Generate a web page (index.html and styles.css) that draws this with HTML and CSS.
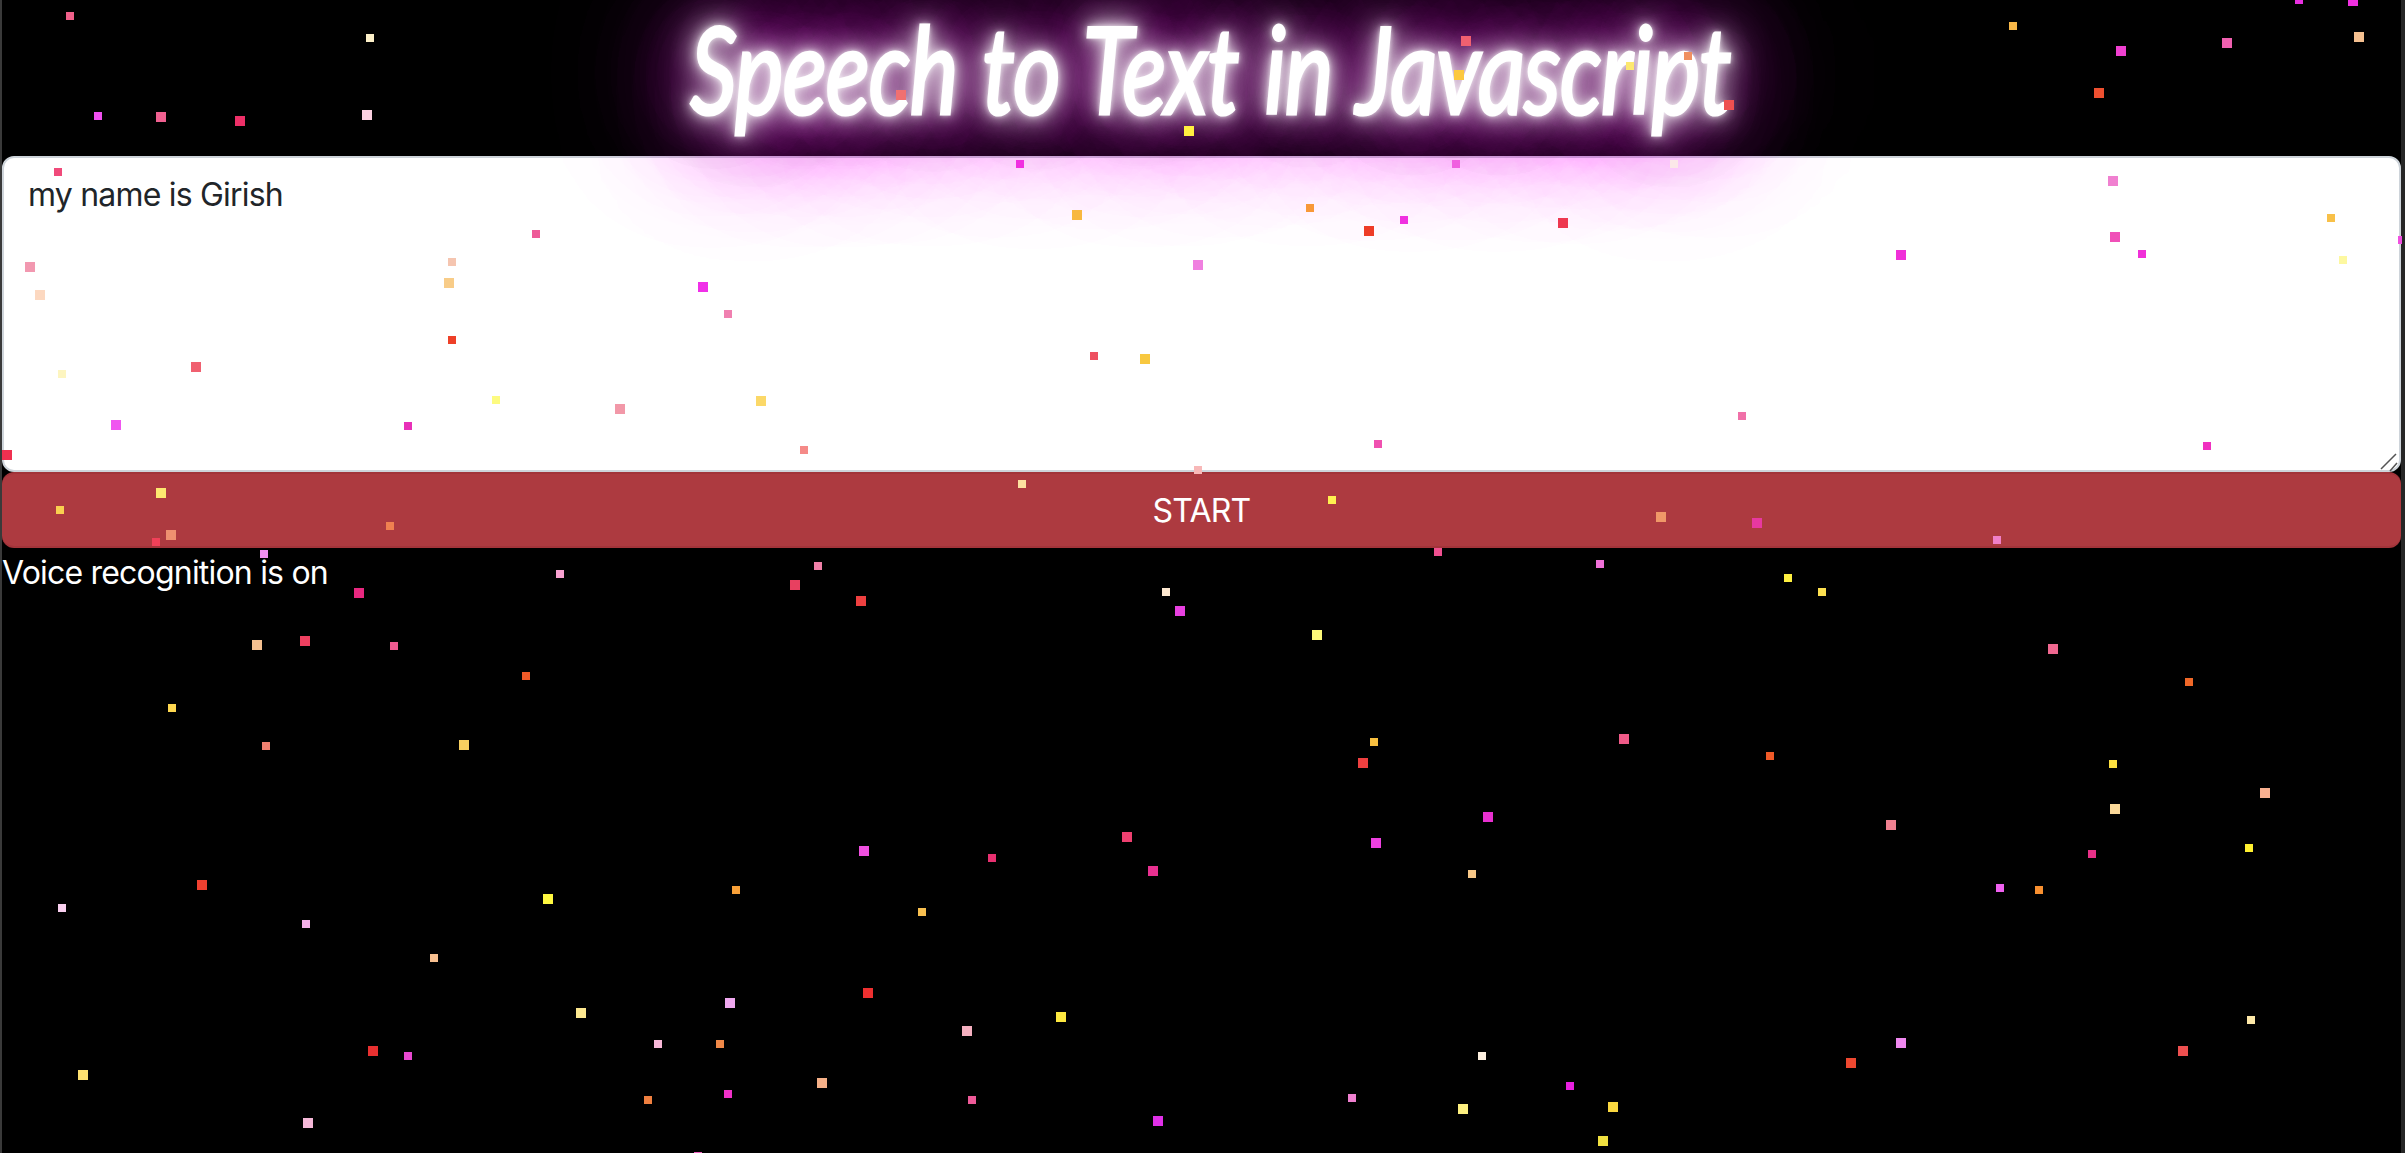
FILE: index.html
```html
<!DOCTYPE html>
<html>
  <head>
    <title>Speech to Text in Javascript</title>
    <link rel="stylesheet" href="styles.css">
  </head>
  <body>
    <h1 class="title"><span class="title-text">Speech to Text in Javascript</span></h1>

    <div class="field">
      <textarea class="note" spellcheck="false">my name is Girish</textarea>
      <svg class="grip" width="20" height="20" viewBox="0 0 20 20">
        <path d="M1 17 L16 2 M10 19 L17 11" />
      </svg>
    </div>
    <button class="start" type="button">START</button>
    <p class="status">Voice recognition is on</p>

    <!-- floating particles -->
    <svg class="particles" width="2402" height="1153" viewBox="0 0 2402 1153" shape-rendering="crispEdges">
      <rect class="p8" x="66" y="12" fill="#f0608a"/>
      <rect class="p8" x="366" y="34" fill="#fdf0c8"/>
      <rect class="p8" x="94" y="112" fill="#f050f0"/>
      <rect class="p10" x="156" y="112" fill="#f06090"/>
      <rect class="p10" x="235" y="116" fill="#ee3068"/>
      <rect class="p10" x="362" y="110" fill="#fbd0e0"/>
      <rect class="p8" x="54" y="168" fill="#f04a7a"/>
      <rect class="p8" x="532" y="230" fill="#ee5a98"/>
      <rect class="p10" x="25" y="262" fill="#f298b0"/>
      <rect class="p10" x="35" y="290" fill="#fcd8c0"/>
      <rect class="p8" x="448" y="258" fill="#f5c5b0"/>
      <rect class="p10" x="444" y="278" fill="#f8cc88"/>
      <rect class="p10" x="698" y="282" fill="#f030e8"/>
      <rect class="p8" x="724" y="310" fill="#f080b0"/>
      <rect class="p8" x="448" y="336" fill="#ee4028"/>
      <rect class="p10" x="191" y="362" fill="#f06070"/>
      <rect class="p8" x="58" y="370" fill="#fdf5c0"/>
      <rect class="p8" x="492" y="396" fill="#fdfb80"/>
      <rect class="p10" x="615" y="404" fill="#f298a8"/>
      <rect class="p10" x="756" y="396" fill="#fbd868"/>
      <rect class="p10" x="111" y="420" fill="#f055f0"/>
      <rect class="p8" x="404" y="422" fill="#e830b8"/>
      <rect class="p10" x="2" y="450" fill="#f03050"/>
      <rect class="p8" x="800" y="446" fill="#f58a88"/>
      <rect class="p10" x="156" y="488" fill="#fde870"/>
      <rect class="p8" x="56" y="506" fill="#fad050"/>
      <rect class="p10" x="166" y="530" fill="#ee9070"/>
      <rect class="p8" x="152" y="538" fill="#f04058"/>
      <rect class="p8" x="386" y="522" fill="#f08050"/>
      <rect class="p8" x="260" y="550" fill="#f090f0"/>
      <rect class="p8" x="556" y="570" fill="#f8a0d0"/>
      <rect class="p10" x="354" y="588" fill="#e82880"/>
      <rect class="p10" x="790" y="580" fill="#e84060"/>
      <rect class="p10" x="252" y="640" fill="#f5c090"/>
      <rect class="p10" x="300" y="636" fill="#ee4060"/>
      <rect class="p8" x="390" y="642" fill="#ee5a90"/>
      <rect class="p8" x="522" y="672" fill="#f05a28"/>
      <rect class="p8" x="168" y="704" fill="#ffd850"/>
      <rect class="p8" x="262" y="742" fill="#f08070"/>
      <rect class="p10" x="459" y="740" fill="#f8d060"/>
      <rect class="p10" x="197" y="880" fill="#f04030"/>
      <rect class="p8" x="58" y="904" fill="#fad0f0"/>
      <rect class="p8" x="302" y="920" fill="#f5b0e8"/>
      <rect class="p10" x="543" y="894" fill="#fff840"/>
      <rect class="p8" x="732" y="886" fill="#f8a038"/>
      <rect class="p8" x="430" y="954" fill="#f8c090"/>
      <rect class="p10" x="725" y="998" fill="#f0a8f0"/>
      <rect class="p10" x="576" y="1008" fill="#fde890"/>
      <rect class="p8" x="654" y="1040" fill="#f8b8d8"/>
      <rect class="p8" x="716" y="1040" fill="#f08848"/>
      <rect class="p10" x="368" y="1046" fill="#e83030"/>
      <rect class="p8" x="404" y="1052" fill="#e848d0"/>
      <rect class="p10" x="78" y="1070" fill="#fde070"/>
      <rect class="p8" x="644" y="1096" fill="#f08040"/>
      <rect class="p8" x="724" y="1090" fill="#f030c8"/>
      <rect class="p10" x="303" y="1118" fill="#f5b8d8"/>
      <rect class="p8" x="694" y="1152" fill="#f060c0"/>
      <rect class="p10" x="896" y="90" fill="#f07070"/>
      <rect class="p10" x="1184" y="126" fill="#fff040"/>
      <rect class="p10" x="1461" y="36" fill="#f06070"/>
      <rect class="p10" x="1454" y="70" fill="#fcc840"/>
      <rect class="p8" x="1016" y="160" fill="#f030e0"/>
      <rect class="p8" x="1452" y="160" fill="#f060e0"/>
      <rect class="p10" x="1072" y="210" fill="#f8b840"/>
      <rect class="p8" x="1306" y="204" fill="#f89838"/>
      <rect class="p10" x="1364" y="226" fill="#ee3c28"/>
      <rect class="p8" x="1400" y="216" fill="#f030e0"/>
      <rect class="p10" x="1558" y="218" fill="#ee3850"/>
      <rect class="p10" x="1193" y="260" fill="#f080e0"/>
      <rect class="p8" x="1090" y="352" fill="#ee5060"/>
      <rect class="p10" x="1140" y="354" fill="#f8c840"/>
      <rect class="p8" x="1684" y="52" fill="#f09060"/>
      <rect class="p8" x="1626" y="62" fill="#fde870"/>
      <rect class="p10" x="1724" y="100" fill="#ee5050"/>
      <rect class="p8" x="1670" y="160" fill="#fbe8e8"/>
      <rect class="p8" x="2009" y="22" fill="#f8b848"/>
      <rect class="p10" x="2116" y="46" fill="#f040d0"/>
      <rect class="p10" x="2222" y="38" fill="#f060b0"/>
      <rect class="p10" x="2354" y="32" fill="#f5c090"/>
      <rect class="p10" x="2094" y="88" fill="#ee5030"/>
      <rect class="p8" x="2295" y="-4" fill="#e830e0"/>
      <rect class="p10" x="2348" y="-4" fill="#f030e0"/>
      <rect class="p10" x="2108" y="176" fill="#f080d0"/>
      <rect class="p8" x="2327" y="214" fill="#f8c048"/>
      <rect class="p10" x="2110" y="232" fill="#f050b8"/>
      <rect class="p8" x="2138" y="250" fill="#f030d8"/>
      <rect class="p10" x="1896" y="250" fill="#f030d8"/>
      <rect class="p8" x="2339" y="256" fill="#fdf8a0"/>
      <rect class="p8" x="2398" y="236" fill="#f050e0"/>
      <rect class="p8" x="1374" y="440" fill="#f050b0"/>
      <rect class="p8" x="1194" y="466" fill="#f8b8b8"/>
      <rect class="p8" x="1018" y="480" fill="#fde0a0"/>
      <rect class="p8" x="1328" y="496" fill="#fff050"/>
      <rect class="p8" x="1434" y="548" fill="#f05090"/>
      <rect class="p8" x="1596" y="560" fill="#f070d8"/>
      <rect class="p8" x="814" y="562" fill="#f080a8"/>
      <rect class="p10" x="856" y="596" fill="#ee4040"/>
      <rect class="p8" x="1162" y="588" fill="#fde8d0"/>
      <rect class="p10" x="1175" y="606" fill="#e840e0"/>
      <rect class="p10" x="1312" y="630" fill="#fdf878"/>
      <rect class="p8" x="1370" y="738" fill="#f8c040"/>
      <rect class="p10" x="1358" y="758" fill="#ee4040"/>
      <rect class="p8" x="1738" y="412" fill="#f070a8"/>
      <rect class="p8" x="2203" y="442" fill="#f030c0"/>
      <rect class="p10" x="1656" y="512" fill="#f09868"/>
      <rect class="p10" x="1752" y="518" fill="#e838a0"/>
      <rect class="p8" x="1993" y="536" fill="#f080c8"/>
      <rect class="p8" x="1784" y="574" fill="#fff040"/>
      <rect class="p8" x="1818" y="588" fill="#fde050"/>
      <rect class="p10" x="2048" y="644" fill="#f06890"/>
      <rect class="p8" x="2185" y="678" fill="#f06828"/>
      <rect class="p10" x="1619" y="734" fill="#f05a88"/>
      <rect class="p8" x="1766" y="752" fill="#f05a28"/>
      <rect class="p8" x="2109" y="760" fill="#fde040"/>
      <rect class="p10" x="2260" y="788" fill="#f8b090"/>
      <rect class="p10" x="2110" y="804" fill="#fad898"/>
      <rect class="p10" x="1886" y="820" fill="#f08090"/>
      <rect class="p8" x="2245" y="844" fill="#fff030"/>
      <rect class="p8" x="2088" y="850" fill="#e83088"/>
      <rect class="p8" x="1996" y="884" fill="#f060f0"/>
      <rect class="p8" x="2035" y="886" fill="#f89030"/>
      <rect class="p8" x="2247" y="1016" fill="#fde8a8"/>
      <rect class="p10" x="2178" y="1046" fill="#ee5050"/>
      <rect class="p10" x="1896" y="1038" fill="#f088f0"/>
      <rect class="p10" x="1846" y="1058" fill="#ee4830"/>
      <rect class="p10" x="1608" y="1102" fill="#fad840"/>
      <rect class="p10" x="1598" y="1136" fill="#f0e040"/>
      <rect class="p10" x="1483" y="812" fill="#e830d0"/>
      <rect class="p10" x="1371" y="838" fill="#ee40e0"/>
      <rect class="p10" x="1122" y="832" fill="#ee4070"/>
      <rect class="p10" x="859" y="846" fill="#f050e0"/>
      <rect class="p8" x="988" y="854" fill="#e83070"/>
      <rect class="p10" x="1148" y="866" fill="#e83090"/>
      <rect class="p8" x="1468" y="870" fill="#f8c888"/>
      <rect class="p8" x="918" y="908" fill="#f8c050"/>
      <rect class="p10" x="863" y="988" fill="#ee3030"/>
      <rect class="p10" x="1056" y="1012" fill="#fde840"/>
      <rect class="p10" x="962" y="1026" fill="#f5b0c0"/>
      <rect class="p8" x="1478" y="1052" fill="#fdf0e0"/>
      <rect class="p10" x="817" y="1078" fill="#f5b088"/>
      <rect class="p8" x="968" y="1096" fill="#ee5a98"/>
      <rect class="p8" x="1348" y="1094" fill="#f080d0"/>
      <rect class="p8" x="1566" y="1082" fill="#e820e0"/>
      <rect class="p10" x="1458" y="1104" fill="#fdf080"/>
      <rect class="p10" x="1153" y="1116" fill="#e030e8"/>
    </svg>
  </body>
</html>
```

FILE: styles.css
```css
* {
  box-sizing: border-box;
}

html,
body {
  height: 100%;
}

body {
  margin: 0;
  background-color: #000;
  border-left: 2px solid #3a3a3a;
  border-right: 4px solid #262626;
  overflow: hidden;
  font-family: "Inter", "Liberation Sans", sans-serif;
  font-size: 32px;
  line-height: 48px;
  letter-spacing: -0.8px;
  color: #fff;
}

.title {
  height: 156px;
  margin: 0;
  padding-top: 14px;
  text-align: center;
  white-space: nowrap;
}

.title-text {
  display: inline-block;
  padding-left: 22px;
  font-family: "Lato", sans-serif;
  font-style: italic;
  font-weight: 400;
  font-size: 112px;
  line-height: 108px;
  letter-spacing: -1px;
  word-spacing: 6px;
  transform: scale(0.82, 1.07);
  color: #fff;
  -webkit-text-stroke: 3px #fff;
  text-shadow:
    0 0 6px #fff,
    0 0 14px #fff,
    0 0 28px #fff,
    0 0 44px #fff,
    0 0 90px #d020d0,
    0 0 120px #d020d0,
    0 0 150px #d020d0,
    0 0 150px #d020d0;
}

.field {
  display: block;
}

.note {
  display: block;
  width: 100%;
  height: 316px;
  padding: 13px 24px;
  border: 2px solid #ced4da;
  border-radius: 12px;
  background-color: #fff;
  color: #212529;
  font: inherit;
  letter-spacing: inherit;
  resize: none;
  outline: none;
}

.grip {
  position: absolute;
  left: 2380px;
  top: 452px;
  fill: none;
  stroke: #555;
  stroke-width: 1.5;
}

.start {
  display: block;
  width: 100%;
  height: 76px;
  padding: 2px 0 0;
  border: 0;
  border-bottom: 2px solid #a2343a;
  border-top: 2px solid #a2343a;
  border-radius: 12px;
  background-color: #ad3a40;
  color: #fff;
  font: inherit;
  letter-spacing: inherit;
}

.status {
  margin: 0;
  padding-top: 1px;
}

.particles {
  position: absolute;
  left: 0;
  top: 0;
  pointer-events: none;
}

.p8 {
  width: 8px;
  height: 8px;
}

.p10 {
  width: 10px;
  height: 10px;
}
```
